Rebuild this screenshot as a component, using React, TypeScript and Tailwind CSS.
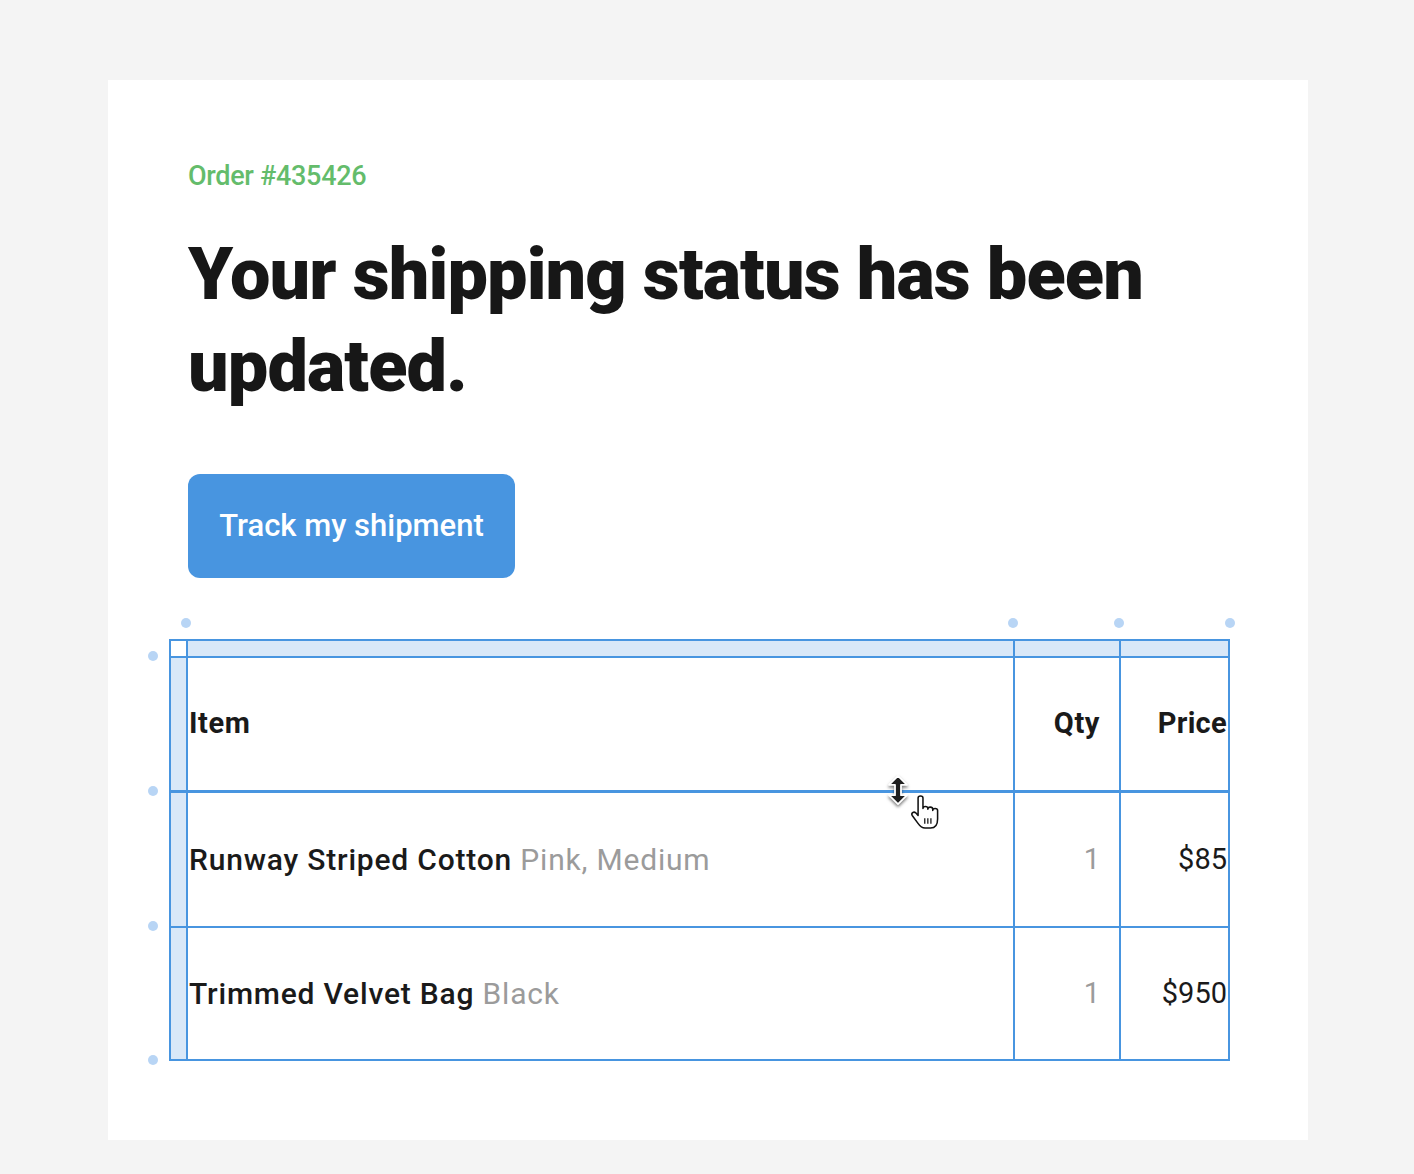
import React from "react";

const font = { fontFamily: "Roboto, 'Noto Sans', sans-serif" };

function Dot({ className }: { className: string }) {
  return <span className={`absolute w-[10px] h-[10px] rounded-full bg-[#b8d5f5] ${className}`} />;
}

function ResizeCursor() {
  return (
    <svg width="24" height="32" viewBox="0 0 24 32" className="absolute left-[717px] top-[135px]" style={{ filter: "drop-shadow(0 2px 1.5px rgba(0,0,0,0.5))" }}>
      <path d="M12 1.8 L21 10.8 L15 10.8 L15 21.2 L21 21.2 L12 30.2 L3 21.2 L9 21.2 L9 10.8 L3 10.8 Z" fill="#1f1f1f" stroke="#fff" strokeWidth="1.8" strokeLinejoin="round" />
    </svg>
  );
}

function HandCursor() {
  return (
    <svg width="29" height="34" viewBox="0.5 0.8 20.2 24.4" className="absolute left-[741px] top-[156px]">
      <path
        d="M6 3 C6 1 9.5 1 9.5 3 L9.5 10.5 C9.5 8.5 13 8.5 13 10.5 L13 11 C13 9 16.5 9 16.5 11 L16.5 12 C16.5 10 20 10 20 12 L20 18 C20 21.5 18.5 24.5 15 24.5 L11 24.5 C8.5 24.5 7.2 23 5.8 21 L1.8 15.5 C0.8 14 2.8 12.3 4.3 13.6 L6 15.5 Z"
        fill="#fff"
        stroke="#111"
        strokeWidth="1.1"
        strokeLinejoin="round"
      />
      <path d="M10.8 17.5 V21.5 M13 17.5 V21.5 M15.2 17.5 V21.5" stroke="#111" strokeWidth="0.9" />
    </svg>
  );
}

const cols = "grid grid-cols-[15px_825px_104px_107px] gap-x-[2px]";

function Row({ name, variant, qty, price, className = "" }: { name: string; variant: string; qty: string; price: string; className?: string }) {
  return (
    <div className={`${cols} ${className}`}>
      <div className="bg-[#d9e8f8]" />
      <div className="bg-white flex items-center pl-[1px] text-[30px] tracking-[0.8px] whitespace-nowrap">
        <span className="font-medium text-[#1a1a1a]">{name}</span>
        <span className="text-[#9b9b9b]">&nbsp;{variant}</span>
      </div>
      <div className="bg-white flex items-center justify-end pr-[19px] text-[29px] text-[#9b9b9b]">{qty}</div>
      <div className="bg-white flex items-center justify-end pr-[1px] text-[29px] text-[#1a1a1a]">{price}</div>
    </div>
  );
}

export default function App() {
  return (
    <div className="min-h-[1174px] bg-[#f4f4f4] pt-[80px] pl-[108px]" style={font}>
      <div className="w-[1200px] h-[1060px] bg-white pt-[80px]">
        <div className="pl-[80px]">
          <div className="text-[27px] leading-[32px] font-medium text-[#64bc6b] tracking-[-0.3px]">Order #435426</div>
          <h1 className="mt-[37px] text-[72px] leading-[92px] font-black text-[#171717] tracking-[-0.9px] w-[1000px]">
            Your shipping status has been updated.
          </h1>
          <div className="mt-[61px] w-[327px] h-[104px] rounded-[12px] bg-[#4895e0] flex items-center justify-center text-white text-[31px] font-medium">
            Track my shipment
          </div>
        </div>
        <div className="relative mt-[61px] ml-[61px] w-[1061px]">
          <Dot className="left-[12px] -top-[21px]" />
          <Dot className="left-[839px] -top-[21px]" />
          <Dot className="left-[945px] -top-[21px]" />
          <Dot className="left-[1056px] -top-[21px]" />
          <Dot className="-left-[21px] top-[12px]" />
          <Dot className="-left-[21px] top-[147px]" />
          <Dot className="-left-[21px] top-[282px]" />
          <Dot className="-left-[21px] top-[416px]" />
          <div className="bg-[#4895e0] p-[2px] flex flex-col gap-y-[2px]">
            <div className={`${cols} h-[15px]`}>
              <div className="bg-white" />
              <div className="bg-[#d9e8f8]" />
              <div className="bg-[#d9e8f8]" />
              <div className="bg-[#d9e8f8]" />
            </div>
            <div className={`${cols} h-[132px] mb-[1px]`}>
              <div className="bg-[#d9e8f8]" />
              <div className="bg-white flex items-center pl-[1px] text-[29px] font-bold text-[#1a1a1a] tracking-[0.6px]">Item</div>
              <div className="bg-white flex items-center justify-end pr-[19px] text-[29px] font-bold text-[#1a1a1a] tracking-[0.6px]">Qty</div>
              <div className="bg-white flex items-center justify-end pr-[1px] text-[29px] font-bold text-[#1a1a1a] tracking-[0.3px]">Price</div>
            </div>
            <Row name="Runway Striped Cotton" variant="Pink, Medium" qty="1" price="$85" className="h-[133px]" />
            <Row name="Trimmed Velvet Bag" variant="Black" qty="1" price="$950" className="h-[131px]" />
          </div>
          <ResizeCursor />
          <HandCursor />
        </div>
      </div>
    </div>
  );
}
